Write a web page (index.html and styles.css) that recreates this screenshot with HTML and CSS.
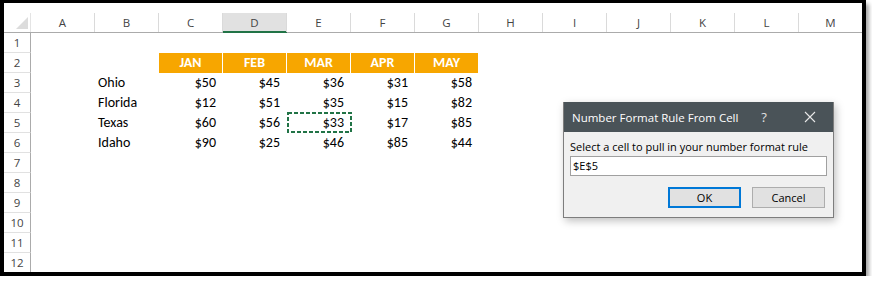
FILE: index.html
```html
<!DOCTYPE html>
<html>
<head>
<meta charset="utf-8">
<link rel="stylesheet" href="styles.css">
</head>
<body>
<div class="frame">
  <div class="sheet">
    <div class="row head">
      <div class="ch corner"><span><svg width="26" height="19" viewBox="0 0 26 19"><polygon points="12,16 24,16 24,4" fill="#dcdcdc"/></svg></span></div>
      <div class="ch"><span>A</span></div>
      <div class="ch"><span>B</span></div>
      <div class="ch"><span>C</span></div>
      <div class="ch sel"><span>D</span></div>
      <div class="ch"><span>E</span></div>
      <div class="ch"><span>F</span></div>
      <div class="ch"><span>G</span></div>
      <div class="ch"><span>H</span></div>
      <div class="ch"><span>I</span></div>
      <div class="ch"><span>J</span></div>
      <div class="ch"><span>K</span></div>
      <div class="ch"><span>L</span></div>
      <div class="ch"><span>M</span></div>
    </div>
    <div class="row"><div class="rh">1</div></div>
    <div class="row">
      <div class="rh">2</div>
      <div class="hdr first">JAN</div><div class="hdr">FEB</div><div class="hdr">MAR</div><div class="hdr">APR</div><div class="hdr">MAY</div>
    </div>
    <div class="row">
      <div class="rh">3</div>
      <div class="nm">Ohio</div><div class="v">$50</div><div class="v">$45</div><div class="v">$36</div><div class="v">$31</div><div class="v">$58</div>
    </div>
    <div class="row">
      <div class="rh">4</div>
      <div class="nm">Florida</div><div class="v">$12</div><div class="v">$51</div><div class="v">$35</div><div class="v">$15</div><div class="v">$82</div>
    </div>
    <div class="row">
      <div class="rh">5</div>
      <div class="nm">Texas</div><div class="v">$60</div><div class="v">$56</div><div class="v ants">$33<svg class="dash" width="65" height="21" viewBox="0 0 65 21"><rect x="1" y="1" width="63" height="19" fill="none" stroke="#217346" stroke-width="2" stroke-dasharray="4 2"/></svg></div><div class="v">$17</div><div class="v">$85</div>
    </div>
    <div class="row">
      <div class="rh">6</div>
      <div class="nm">Idaho</div><div class="v">$90</div><div class="v">$25</div><div class="v">$46</div><div class="v">$85</div><div class="v">$44</div>
    </div>
    <div class="row"><div class="rh">7</div></div>
    <div class="row"><div class="rh">8</div></div>
    <div class="row"><div class="rh">9</div></div>
    <div class="row"><div class="rh">10</div></div>
    <div class="row"><div class="rh">11</div></div>
    <div class="row"><div class="rh">12</div></div>
  </div>
</div>

<div class="dialog">
  <div class="titlebar">
    <span class="title">Number Format Rule From Cell</span>
    <span class="help">?</span>
    <span class="close"><svg width="12" height="12" viewBox="0 0 12 12"><path d="M1 1 L11 11 M11 1 L1 11" stroke="#e8e8e8" stroke-width="1.1" fill="none"/></svg></span>
  </div>
  <div class="dbody">
    <div class="label">Select a cell to pull in your number format rule</div>
    <div class="input">$E$5</div>
    <div class="buttons">
      <div class="btn ok">OK</div>
      <div class="btn">Cancel</div>
    </div>
  </div>
</div>
</body>
</html>
```

FILE: styles.css
```css
body {
  margin: 0;
  background: #fff;
}

.frame {
  width: 858px;
  height: 269px;
  border: 4px solid #000;
  border-top-width: 3px;
  box-shadow: 3px 4px 4px rgba(0, 0, 0, 0.35);
  overflow: hidden;
  background: #fff;
}

.sheet {
  width: 900px;
}

.row {
  display: grid;
  grid-template-columns: 27px repeat(13, 64px);
  height: 20px;
}

.row.head {
  height: 30px;
}

.ch {
  box-sizing: border-box;
  height: 30px;
  padding-top: 10px;
  border-bottom: 1px solid #ababab;
}

.ch span {
  box-sizing: border-box;
  display: flex;
  align-items: center;
  justify-content: center;
  height: 19px;
  border-right: 1px solid #dadada;
  font-family: "Segoe UI", "Open Sans", sans-serif;
  font-size: 11.5px;
  color: #444;
}

.ch.corner span {
  border-right: 1px solid #e4e4e4;
  display: block;
}

.ch.corner svg {
  display: block;
}

.ch.sel {
  border-bottom-color: #217346;
}

.ch.sel span {
  background: #e1e1e1;
  box-shadow: inset 0 -1px 0 #217346;
}

.rh {
  box-sizing: border-box;
  height: 20px;
  border-right: 1px solid #ababab;
  border-bottom: 1px solid #e1e1e1;
  font-family: "Segoe UI", "Open Sans", sans-serif;
  font-size: 11.5px;
  line-height: 19px;
  color: #444;
  text-align: center;
}

.nm, .v, .hdr {
  font-family: "Carlito", "Lato", sans-serif;
  font-size: 14px;
  line-height: 20px;
  color: #000;
  white-space: nowrap;
}

.nm {
  grid-column: 3;
  padding-left: 3px;
}

.v {
  text-align: right;
  padding-right: 7px;
}

.hdr {
  background: #f7a600;
  color: #fff;
  font-weight: bold;
  text-align: center;
  border-right: 1px solid #fff;
}

.hdr.first {
  grid-column: 4;
}

.ants {
  position: relative;
}

.dash {
  position: absolute;
  left: 0;
  top: -1px;
}

/* dialog */
.dialog {
  position: absolute;
  left: 563px;
  top: 102px;
  width: 271px;
  box-sizing: border-box;
  border: 1px solid #7d7d7d;
  border-top: none;
  background: #f0f0f0;
  box-shadow: 2px 3px 8px rgba(0, 0, 0, 0.25);
  font-family: "Segoe UI", "Open Sans", sans-serif;
  font-size: 11px;
}

.titlebar {
  height: 30px;
  background: #4a5358;
  display: flex;
  align-items: center;
  padding-left: 8px;
  color: #fff;
}

.title {
  flex: 1;
  font-size: 11.5px;
  white-space: nowrap;
}

.help {
  width: 20px;
  text-align: center;
  margin-right: 21px;
  font-size: 13px;
  color: #e0e0e0;
}

.close {
  width: 30px;
  margin-right: 8px;
  display: flex;
  justify-content: center;
}

.close svg {
  display: block;
}

.dbody {
  padding: 7px 6px 9px 6px;
}

.label {
  line-height: 16px;
  color: #000;
  white-space: nowrap;
}

.input {
  margin-top: 1px;
  box-sizing: border-box;
  height: 20px;
  border: 1px solid #a0a0a0;
  background: #fff;
  padding-left: 2px;
  line-height: 18px;
  color: #000;
}

.buttons {
  margin-top: 11px;
  display: flex;
  justify-content: flex-end;
  gap: 11px;
  padding-right: 2px;
}

.btn {
  box-sizing: border-box;
  width: 73px;
  height: 21px;
  border: 1px solid #adadad;
  background: #e1e1e1;
  display: flex;
  align-items: center;
  justify-content: center;
  color: #000;
}

.btn.ok {
  border: 2px solid #0078d7;
}
```
